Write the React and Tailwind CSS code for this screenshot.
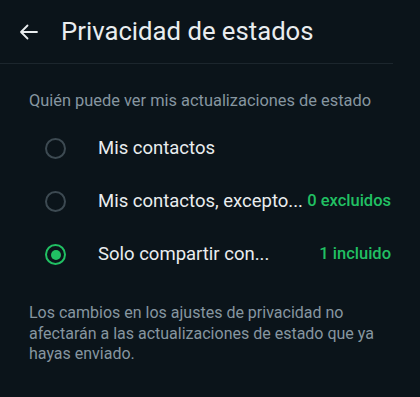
import React from "react";

function Radio({ checked }) {
  if (checked) {
    return (
      <div className="w-[21px] h-[21px] rounded-full border-[2.5px] border-[#21c063] flex items-center justify-center shrink-0">
        <div className="w-[10px] h-[10px] rounded-full bg-[#21c063]" />
      </div>
    );
  }
  return <div className="w-[21px] h-[21px] rounded-full border-2 border-[#3d4a52] shrink-0" />;
}

function Row({ label, extra, checked }) {
  return (
    <div className="h-[53px] flex items-center pl-[45px] pr-[29px]">
      <Radio checked={checked} />
      <span className="ml-[32px] text-[18.5px] text-[#e9edef] whitespace-nowrap">{label}</span>
      {extra && (
        <span className="ml-auto text-[16.5px] font-medium text-[#21c063] whitespace-nowrap">{extra}</span>
      )}
    </div>
  );
}

export default function App() {
  return (
    <div
      className="w-[420px] h-[397px] bg-[#0b141a] overflow-hidden"
      style={{ fontFamily: "Roboto, 'Noto Sans', sans-serif" }}
    >
      <div className="h-[64px] flex items-center pl-[19px] border-b border-[#1c262d] mr-[27px]">
        <svg width="19" height="16" viewBox="0 0 19 16" fill="none" className="shrink-0">
          <path d="M18 8H2M8.5 1.5L2 8l6.5 6.5" stroke="#e9edef" strokeWidth="1.8" strokeLinecap="round" strokeLinejoin="round" />
        </svg>
        <span className="ml-[23px] text-[25.7px] text-[#e9edef] leading-none pt-[1px]">Privacidad de estados</span>
      </div>
      <div className="pt-[27px] px-[29px] text-[16.4px] leading-[20px] text-[#8696a0] whitespace-nowrap">
        Quién puede ver mis actualizaciones de estado
      </div>
      <div className="mt-[11px]">
        <Row label="Mis contactos" />
        <Row label="Mis contactos, excepto..." extra="0 excluidos" />
        <Row label="Solo compartir con..." extra="1 incluido" checked />
      </div>
      <div className="mt-[22px] pl-[29px] pr-[30px] text-[16px] leading-[20.5px] text-[#8696a0]">
        Los cambios en los ajustes de privacidad no afectarán a las actualizaciones de estado que ya hayas enviado.
      </div>
    </div>
  );
}
